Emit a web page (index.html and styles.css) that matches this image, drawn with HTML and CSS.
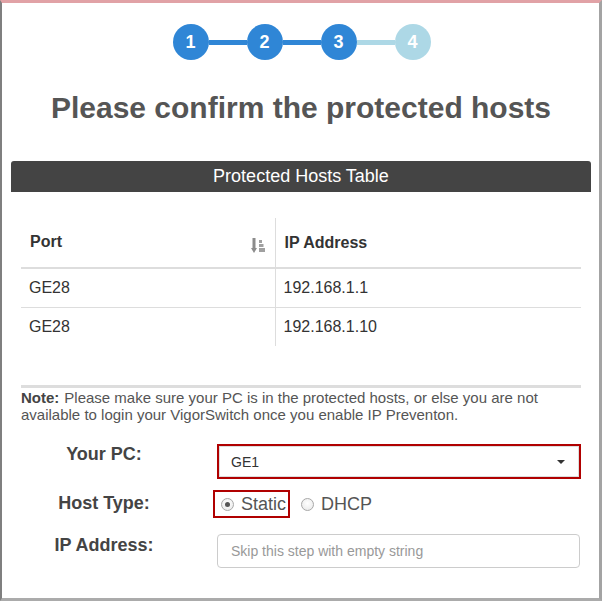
FILE: index.html
```html
<!DOCTYPE html>
<html>
<head>
<meta charset="utf-8">
<link rel="stylesheet" href="styles.css">
</head>
<body>
<div class="frame">
  <div class="stepper">
    <span class="step done">1</span>
    <span class="bar done"></span>
    <span class="step done">2</span>
    <span class="bar done"></span>
    <span class="step done">3</span>
    <span class="bar todo"></span>
    <span class="step todo">4</span>
  </div>
  <h1 class="title">Please confirm the protected hosts</h1>
  <div class="panel">
    <div class="panel-head">Protected Hosts Table</div>
    <div class="panel-body">
      <table class="hosts">
        <thead>
          <tr>
            <th class="c-port"><div class="th-inner"><span>Port</span>
              <svg class="sort" width="14" height="17" viewBox="0 0 14 17">
                <rect x="1.5" y="1" width="3" height="11" fill="#8c8c8c"/>
                <path d="M0 11 L6 11 L3 16 Z" fill="#8c8c8c"/>
                <rect x="8" y="3" width="3" height="3" fill="#a0a0a0"/>
                <rect x="8" y="7" width="4.5" height="3" fill="#a0a0a0"/>
                <rect x="8" y="11" width="6" height="4" fill="#a0a0a0"/>
              </svg></div>
            </th>
            <th class="c-ip">IP Address</th>
          </tr>
        </thead>
        <tbody>
          <tr><td class="c-port">GE28</td><td class="c-ip">192.168.1.1</td></tr>
          <tr><td class="c-port">GE28</td><td class="c-ip">192.168.1.10</td></tr>
        </tbody>
      </table>
    </div>
  </div>
  <div class="note"><p class="note-text"><b class="note-key">Note:</b><span>Please make sure your PC is in the protected hosts, or else you are not available to login your VigorSwitch once you enable IP Preventon.</span></p></div>
  <div class="form">
    <div class="label l1">Your PC:</div>
    <div class="select">
      <span>GE1</span>
      <span class="caret"></span>
    </div>
    <div class="label l2">Host Type:</div>
    <div class="radios">
      <label class="radio-box"><span class="radio checked"></span><span class="rtext">Static</span></label>
      <label class="radio-plain"><span class="radio"></span><span class="rtext">DHCP</span></label>
    </div>
    <div class="label l3">IP Address:</div>
    <div class="input">Skip this step with empty string</div>
  </div>
</div>
</body>
</html>
```
FILE: styles.css
```css
* { box-sizing: border-box; }
html, body { margin: 0; padding: 0; background: #fff; }
body { font-family: "Liberation Sans", Arial, sans-serif; color: #333; }

.frame {
  width: 602px;
  height: 601px;
  border-top: 3px solid #e1a2a6;
  border-left: 2px solid #7f7f7f;
  border-right: 3px solid #a3a3a3;
  border-bottom: 3px solid #ababab;
  padding: 0 8px 0 9px;
  overflow: hidden;
}

.stepper {
  display: flex;
  justify-content: center;
  align-items: center;
  margin-top: 21px;
  height: 36px;
  padding-left: 1px;
}
.step {
  width: 36px;
  height: 36px;
  border-radius: 50%;
  color: #fff;
  font-weight: bold;
  font-size: 18px;
  display: flex;
  align-items: center;
  justify-content: center;
}
.step.done { background: #2f86d6; }
.step.todo { background: #add8e6; }
.bar { width: 38px; height: 5px; }
.bar.done { background: #2f86d6; }
.bar.todo { background: #add8e6; }

.title {
  margin: 31px 0 0;
  font-size: 30px;
  line-height: 34px;
  font-weight: bold;
  color: #555;
  text-align: center;
}

.panel { margin-top: 36px; }
.panel-head {
  background: #444;
  color: #fff;
  height: 31px;
  line-height: 31px;
  text-align: center;
  font-size: 18px;
  border-radius: 3px 3px 0 0;
}
.panel-body { padding: 26px 10px 0; }

.hosts {
  width: 100%;
  border-collapse: collapse;
  font-size: 16px;
}
.hosts th {
  text-align: left;
  font-weight: bold;
  height: 50px;
  padding: 0 8px 0 9px;
  border-bottom: 2px solid #ddd;
  vertical-align: middle;
}
.th-inner { display: flex; justify-content: space-between; align-items: center; padding-bottom: 2px; }
.sort { margin-right: 2px; margin-top: 8px; }
.hosts td {
  height: 39px;
  padding: 0 8px;
  vertical-align: middle;
}
.hosts tbody tr + tr td { border-top: 1px solid #ddd; }
.hosts .c-port { width: 254px; border-right: 1px solid #ddd; }
.hosts td.c-ip { padding-left: 8px; }

.note {
  margin: 39px 10px 0;
  border-top: 3px solid #ddd;
  padding-top: 1px;
}
.note-text {
  margin: 0;
  padding-right: 20px;
  font-size: 15px;
  line-height: 17px;
  color: #555;
}
.note-key { color: #444; margin-right: 5px; }

.form {
  margin: 21px 10px 0;
  display: grid;
  grid-template-columns: 166px 364px;
  column-gap: 30px;
  row-gap: 11px;
}
.label {
  font-size: 18px;
  font-weight: bold;
  color: #444;
  text-align: center;
  line-height: 20px;
}
.l1 { padding-top: 0; }
.l2 { padding-top: 3px; }
.l3 { padding-top: 6px; }

.select {
  height: 35px;
  border: 2px solid #b00000;
  display: flex;
  align-items: center;
  justify-content: space-between;
  padding: 0 12px 0 12px;
  font-size: 14px;
  color: #333;
  box-shadow: inset 0 0 0 1px #ddd;
}
.caret {
  width: 0; height: 0;
  border-left: 4px solid transparent;
  border-right: 4px solid transparent;
  border-top: 4px solid #333;
  margin-right: 2px;
}

.radios { display: flex; align-items: center; height: 28px; margin-left: -4px; }
.radio-box {
  display: flex; align-items: center;
  height: 28px;
  border: 2px solid #b00000;
  padding: 0 2px 0 6px;
}
.radio-plain { display: flex; align-items: center; margin-left: 11px; }
.radio {
  width: 13px; height: 13px;
  border-radius: 50%;
  border: 1px solid #a8a8a8;
  background: radial-gradient(circle at 50% 40%, #fff 0%, #e6e6e6 100%);
  position: relative;
  margin-right: 7px;
}
.radio.checked::after {
  content: "";
  position: absolute;
  left: 3px; top: 3px;
  width: 5px; height: 5px;
  border-radius: 50%;
  background: #555;
}
.rtext { font-size: 18px; color: #555; line-height: 20px; }

.input {
  height: 34px;
  border: 1px solid #ccc;
  border-radius: 4px;
  padding: 0 13px;
  display: flex;
  align-items: center;
  font-size: 14px;
  color: #999;
  margin-top: 5px;
  width: 363px;
}
```
